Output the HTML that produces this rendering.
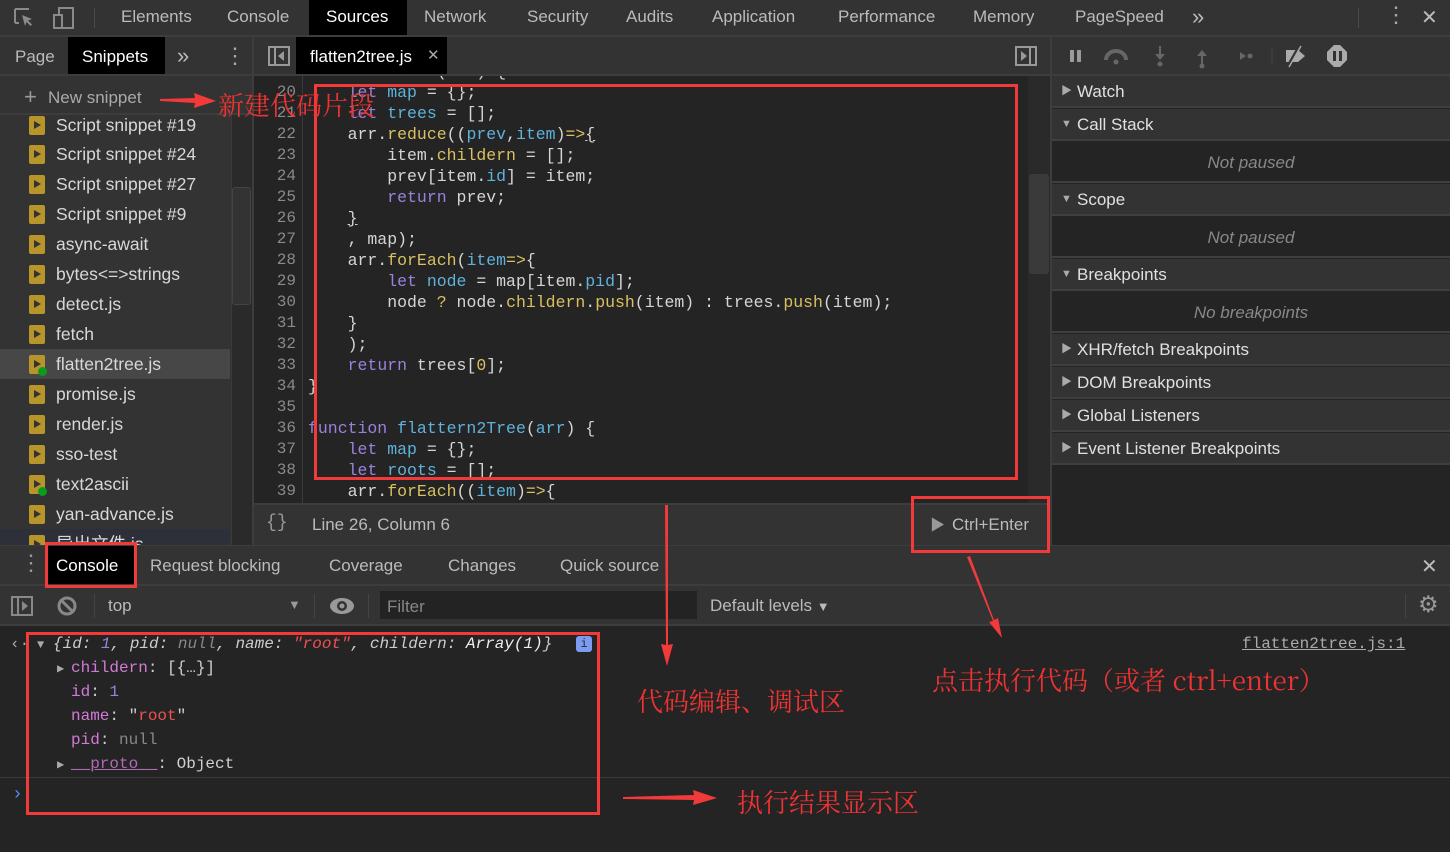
<!DOCTYPE html>
<html><head><meta charset="utf-8"><style>
*{margin:0;padding:0;box-sizing:border-box}
body{width:1450px;height:852px;background:#242424;position:relative;overflow:hidden;font-family:"Liberation Sans","Noto Sans CJK SC",sans-serif;color:#d0d0d0;font-size:17px}
.a{position:absolute;white-space:nowrap}
.bar{background:#333;border-bottom:2px solid #3d3d3d}
.mono{font-family:"Liberation Mono","DejaVu Sans Mono",monospace}
.code div{position:absolute;height:21px;line-height:21px;font-size:16.5px;white-space:pre}
.code .ln{left:256px;width:40px;text-align:right;color:#8a8a8a;font-size:16px}
.k{color:#9a82dc}.v{color:#5fb2db}.f{color:#d9c060}.s{color:#d5d5d5}
.snip{position:absolute;left:0;width:230px;height:30px;line-height:30px;padding-left:56px;color:#d8d8d8;font-size:17.5px}
.ic{position:absolute;left:29px;top:6px;width:16px;height:19px;background:#b8952a;border-radius:2px}
.ic:after{content:"";position:absolute;left:5px;top:5px;border-left:7px solid #333;border-top:4.5px solid transparent;border-bottom:4.5px solid transparent}
.sec{position:absolute;left:1052px;width:398px;height:32px;line-height:31px;background:#333;border-bottom:2px solid #3f3f3f;padding-left:25px;color:#e0e0e0;font-size:17px}
.sec i{position:absolute;left:9px;top:0;font-style:normal;font-size:11px;color:#aaa}
.np{position:absolute;left:1052px;width:398px;height:41px;line-height:41px;text-align:center;font-style:italic;color:#888;background:#242424;border-bottom:2px solid #3f3f3f}
.cl{position:absolute;height:24px;line-height:24px;font-size:16px;white-space:pre}
.red{position:absolute;border:3px solid #f23a3a}
.ann{position:absolute;color:#ee3333;font-size:26px;font-family:"Noto Serif CJK SC","Noto Sans CJK SC",serif;white-space:nowrap}
</style></head><body>
<!-- top bar -->
<div class="a bar" style="left:0;top:0;width:1450px;height:37px"></div>
<svg class="a" style="left:12px;top:6px" width="70" height="24"><path d="M3 3h14M3 3v14M3 17h4" stroke="#8a8a8a" stroke-width="2" fill="none"/><path d="M10 9l10 4-4 1.5 4 4-1.5 1.5-4-4-1.5 4z" fill="#8a8a8a"/><rect x="47" y="2" width="14" height="20" stroke="#8a8a8a" stroke-width="2" fill="none"/><rect x="42" y="9" width="8" height="13" stroke="#8a8a8a" stroke-width="2" fill="#333"/></svg>
<div class="a" style="left:94px;top:8px;width:1px;height:20px;background:#4a4a4a"></div>
<div class="a" style="left:121px;top:7px;color:#bbb">Elements</div>
<div class="a" style="left:227px;top:7px;color:#bbb">Console</div>
<div class="a" style="left:309px;top:0;width:98px;height:35px;background:#000"></div>
<div class="a" style="left:326px;top:7px;color:#fff">Sources</div>
<div class="a" style="left:424px;top:7px;color:#bbb">Network</div>
<div class="a" style="left:527px;top:7px;color:#bbb">Security</div>
<div class="a" style="left:626px;top:7px;color:#bbb">Audits</div>
<div class="a" style="left:712px;top:7px;color:#bbb">Application</div>
<div class="a" style="left:838px;top:7px;color:#bbb">Performance</div>
<div class="a" style="left:973px;top:7px;color:#bbb">Memory</div>
<div class="a" style="left:1075px;top:7px;color:#bbb">PageSpeed</div>
<div class="a" style="left:1192px;top:4px;color:#bbb;font-size:22px">»</div>
<div class="a" style="left:1358px;top:8px;width:1px;height:20px;background:#4a4a4a"></div>
<div class="a" style="left:1385px;top:2px;color:#aaa;font-size:22px">⋮</div>
<div class="a" style="left:1421px;top:5px;color:#bbb;font-size:20px">✕</div>

<!-- left sidebar -->
<div class="a bar" style="left:0;top:37px;width:252px;height:39px"></div>
<div class="a" style="left:15px;top:47px;color:#bbb">Page</div>
<div class="a" style="left:68px;top:37px;width:97px;height:37px;background:#000"></div>
<div class="a" style="left:82px;top:47px;color:#fff">Snippets</div>
<div class="a" style="left:177px;top:43px;color:#bbb;font-size:22px">»</div>
<div class="a" style="left:224px;top:43px;color:#aaa;font-size:22px">⋮</div>
<div class="a" style="left:0;top:76px;width:252px;height:39px;background:#333;border-bottom:2px solid #3d3d3d"></div>
<div class="a" style="left:24px;top:84px;color:#999;font-size:22px">+</div>
<div class="a" style="left:48px;top:88px;color:#aaa">New snippet</div>
<div class="a" style="left:0;top:115px;width:252px;height:430px;background:#333;overflow:hidden">
 <div class="snip" style="top:-5px"><b class="ic"></b>Script snippet #19</div>
 <div class="snip" style="top:24px"><b class="ic"></b>Script snippet #24</div>
 <div class="snip" style="top:54px"><b class="ic"></b>Script snippet #27</div>
 <div class="snip" style="top:84px"><b class="ic"></b>Script snippet #9</div>
 <div class="snip" style="top:114px"><b class="ic"></b>async-await</div>
 <div class="snip" style="top:144px"><b class="ic"></b>bytes&lt;=&gt;strings</div>
 <div class="snip" style="top:174px"><b class="ic"></b>detect.js</div>
 <div class="snip" style="top:204px"><b class="ic"></b>fetch</div>
 <div class="snip" style="top:234px;background:#474747"><b class="ic"></b><b class="a" style="left:38px;top:18px;width:9px;height:9px;border-radius:50%;background:#0a9c1a"></b>flatten2tree.js</div>
 <div class="snip" style="top:264px"><b class="ic"></b>promise.js</div>
 <div class="snip" style="top:294px"><b class="ic"></b>render.js</div>
 <div class="snip" style="top:324px"><b class="ic"></b>sso-test</div>
 <div class="snip" style="top:354px"><b class="ic"></b><b class="a" style="left:38px;top:18px;width:9px;height:9px;border-radius:50%;background:#0a9c1a"></b>text2ascii</div>
 <div class="snip" style="top:384px"><b class="ic"></b>yan-advance.js</div>
 <div class="snip" style="top:414px;background:#2d3038"><b class="ic"></b>导出文件.js</div>
 <div class="a" style="left:231px;top:0;width:21px;height:430px;background:#2a2a2a;border-left:1px solid #3a3a3a"></div>
 <div class="a" style="left:232px;top:72px;width:19px;height:118px;background:#333;border:1px solid #444;border-radius:3px"></div>
</div>
<div class="a" style="left:252px;top:37px;width:2px;height:508px;background:#3d3d3d"></div>

<!-- editor -->
<div class="a bar" style="left:254px;top:37px;width:796px;height:39px"></div>
<svg class="a" style="left:268px;top:46px" width="22" height="20"><rect x="1" y="1" width="20" height="18" stroke="#999" stroke-width="2" fill="none"/><line x1="7" y1="1" x2="7" y2="19" stroke="#999" stroke-width="2"/><path d="M16 5v10l-6-5z" fill="#999"/></svg>
<div class="a" style="left:296px;top:37px;width:151px;height:37px;background:#000"></div>
<div class="a" style="left:310px;top:47px;color:#fff">flatten2tree.js</div>
<div class="a" style="left:427px;top:46px;color:#aaa;font-size:15px">✕</div>
<svg class="a" style="left:1015px;top:46px" width="22" height="20"><rect x="1" y="1" width="20" height="18" stroke="#999" stroke-width="2" fill="none"/><line x1="15" y1="1" x2="15" y2="19" stroke="#999" stroke-width="2"/><path d="M6 5v10l6-5z" fill="#999"/></svg>
<div class="a" style="left:254px;top:76px;width:796px;height:429px;background:#242424;overflow:hidden">
 <div class="a" style="left:48px;top:0;width:1px;height:429px;background:#3a3a3a"></div>
 <div class="a" style="left:774px;top:0;width:22px;height:429px;background:#2a2a2a"></div>
 <div class="a" style="left:775px;top:98px;width:20px;height:100px;background:#3a3a3a;border-radius:3px"></div>
</div>
<div class="a mono code" style="left:0;top:0;width:1029px;height:505px;overflow:hidden;clip-path:inset(76px 0 0 254px)">
<div style="top:61px;left:308px" class="s">    function (arr) {</div>
<div class="ln" style="top:82px">20</div><div style="top:82px;left:308px" class="s">    <span class="k">let</span> <span class="v">map</span> = {};</div>
<div class="ln" style="top:103px">21</div><div style="top:103px;left:308px" class="s">    <span class="k">let</span> <span class="v">trees</span> = [];</div>
<div class="ln" style="top:124px">22</div><div style="top:124px;left:308px" class="s">    arr.<span class="f">reduce</span>((<span class="v">prev</span>,<span class="v">item</span>)<span class="f">=&gt;</span><u>{</u></div>
<div class="ln" style="top:145px">23</div><div style="top:145px;left:308px" class="s">        item.<span class="f">childern</span> = [];</div>
<div class="ln" style="top:166px">24</div><div style="top:166px;left:308px" class="s">        prev[item.<span class="v">id</span>] = item;</div>
<div class="ln" style="top:187px">25</div><div style="top:187px;left:308px" class="s">        <span class="k">return</span> prev;</div>
<div class="ln" style="top:208px">26</div><div style="top:208px;left:308px" class="s">    <u>}</u></div>
<div class="ln" style="top:229px">27</div><div style="top:229px;left:308px" class="s">    , map);</div>
<div class="ln" style="top:250px">28</div><div style="top:250px;left:308px" class="s">    arr.<span class="f">forEach</span>(<span class="v">item</span><span class="f">=&gt;</span>{</div>
<div class="ln" style="top:271px">29</div><div style="top:271px;left:308px" class="s">        <span class="k">let</span> <span class="v">node</span> = map[item.<span class="v">pid</span>];</div>
<div class="ln" style="top:292px">30</div><div style="top:292px;left:308px" class="s">        node <span class="f">?</span> node.<span class="f">childern</span>.<span class="f">push</span>(item) : trees.<span class="f">push</span>(item);</div>
<div class="ln" style="top:313px">31</div><div style="top:313px;left:308px" class="s">    }</div>
<div class="ln" style="top:334px">32</div><div style="top:334px;left:308px" class="s">    );</div>
<div class="ln" style="top:355px">33</div><div style="top:355px;left:308px" class="s">    <span class="k">return</span> trees[<span class="f">0</span>];</div>
<div class="ln" style="top:376px">34</div><div style="top:376px;left:308px" class="s">}</div>
<div class="ln" style="top:397px">35</div>
<div class="ln" style="top:418px">36</div><div style="top:418px;left:308px" class="s"><span class="k">function</span> <span class="v">flattern2Tree</span>(<span class="v">arr</span>) {</div>
<div class="ln" style="top:439px">37</div><div style="top:439px;left:308px" class="s">    <span class="k">let</span> <span class="v">map</span> = {};</div>
<div class="ln" style="top:460px">38</div><div style="top:460px;left:308px" class="s">    <span class="k">let</span> <span class="v">roots</span> = [];</div>
<div class="ln" style="top:481px">39</div><div style="top:481px;left:308px" class="s">    arr.<span class="f">forEach</span>((<span class="v">item</span>)<span class="f">=&gt;</span>{</div>
</div>
<div class="a" style="left:254px;top:503px;width:796px;height:42px;background:#333;border-top:2px solid #3d3d3d"></div>
<div class="a mono" style="left:266px;top:513px;color:#999;font-size:18px">{}</div>
<div class="a" style="left:312px;top:515px;color:#bbb">Line 26, Column 6</div>
<div class="a" style="left:930px;top:514px;color:#999;font-size:15px">▶</div>
<div class="a" style="left:952px;top:515px;color:#bbb">Ctrl+Enter</div>
<div class="a" style="left:1050px;top:37px;width:2px;height:508px;background:#3d3d3d"></div>

<!-- right pane -->
<div class="a bar" style="left:1052px;top:37px;width:398px;height:39px"></div>
<svg class="a" style="left:1062px;top:42px" width="300" height="28"><g fill="#9a9a9a"><rect x="8" y="8" width="4" height="12"/><rect x="15" y="8" width="4" height="12"/></g><g fill="#666"><path d="M44 18a10 9 0 0 1 20 0" stroke="#666" stroke-width="4" fill="none"/><circle cx="54" cy="20" r="2.5"/><path d="M97 4v8h-4l5 6 5-6h-4V4z"/><circle cx="98" cy="22" r="2.5"/><path d="M139 22v-8h-4l5-6 5 6h-4v8z"/><circle cx="140" cy="24" r="2.5"/><path d="M172 14h6v-4l6 4-6 4v-4z"/><circle cx="188" cy="14" r="2.5"/></g><line x1="210" y1="5" x2="210" y2="23" stroke="#444"/><path d="M224 8h12l7 6-7 6h-12z" fill="#aaa"/><line x1="226" y1="24" x2="238" y2="3" stroke="#333" stroke-width="3"/><line x1="227" y1="25" x2="239" y2="4" stroke="#aaa" stroke-width="1.5"/><path d="M272 3h6l7 7v8l-7 7h-6l-7-7v-8z" fill="#aaa"/><rect x="271" y="9" width="3" height="10" fill="#333"/><rect x="277" y="9" width="3" height="10" fill="#333"/></svg>
<div class="sec" style="top:76px"><i>▶</i>Watch</div>
<div class="sec" style="top:109px"><i>▼</i>Call Stack</div>
<div class="np" style="top:142px">Not paused</div>
<div class="sec" style="top:184px"><i>▼</i>Scope</div>
<div class="np" style="top:217px">Not paused</div>
<div class="sec" style="top:259px"><i>▼</i>Breakpoints</div>
<div class="np" style="top:292px">No breakpoints</div>
<div class="sec" style="top:334px"><i>▶</i>XHR/fetch Breakpoints</div>
<div class="sec" style="top:367px"><i>▶</i>DOM Breakpoints</div>
<div class="sec" style="top:400px"><i>▶</i>Global Listeners</div>
<div class="sec" style="top:433px"><i>▶</i>Event Listener Breakpoints</div>

<!-- drawer -->
<div class="a bar" style="left:0;top:545px;width:1450px;height:41px;border-top:1px solid #3d3d3d"></div>
<div class="a" style="left:20px;top:550px;color:#999;font-size:22px">⋮</div>
<div class="a" style="left:46px;top:546px;width:90px;height:38px;background:#000"></div>
<div class="a" style="left:56px;top:556px;color:#fff">Console</div>
<div class="a" style="left:150px;top:556px;color:#bbb">Request blocking</div>
<div class="a" style="left:329px;top:556px;color:#bbb">Coverage</div>
<div class="a" style="left:448px;top:556px;color:#bbb">Changes</div>
<div class="a" style="left:560px;top:556px;color:#bbb">Quick source</div>
<div class="a" style="left:1421px;top:554px;color:#bbb;font-size:20px">✕</div>
<div class="a bar" style="left:0;top:586px;width:1450px;height:40px"></div>
<svg class="a" style="left:10px;top:594px" width="70" height="24"><rect x="2" y="3" width="20" height="18" stroke="#888" stroke-width="2" fill="none"/><line x1="8" y1="3" x2="8" y2="21" stroke="#888" stroke-width="2"/><path d="M12 7v10l6-5z" fill="#888"/><circle cx="57" cy="12" r="8" stroke="#888" stroke-width="3" fill="none"/><line x1="51" y1="6" x2="63" y2="18" stroke="#888" stroke-width="3"/></svg>
<div class="a" style="left:94px;top:594px;width:1px;height:24px;background:#444"></div>
<div class="a" style="left:108px;top:596px;color:#bbb">top</div>
<div class="a" style="left:288px;top:597px;color:#999;font-size:13px">▼</div>
<div class="a" style="left:314px;top:594px;width:1px;height:24px;background:#444"></div>
<svg class="a" style="left:329px;top:596px" width="26" height="20"><ellipse cx="13" cy="10" rx="12" ry="8" fill="#999"/><circle cx="13" cy="10" r="5" fill="#333"/><circle cx="13" cy="10" r="2.5" fill="#999"/></svg>
<div class="a" style="left:368px;top:594px;width:1px;height:24px;background:#444"></div>
<div class="a" style="left:380px;top:591px;width:317px;height:28px;background:#232323"></div>
<div class="a" style="left:387px;top:597px;color:#888">Filter</div>
<div class="a" style="left:710px;top:596px;color:#bbb">Default levels <span style="font-size:13px">▼</span></div>
<div class="a" style="left:1405px;top:594px;width:1px;height:24px;background:#444"></div>
<div class="a" style="left:1418px;top:591px;color:#999;font-size:23px">⚙</div>

<!-- console output -->
<div class="a mono" style="left:0;top:626px;width:1450px;height:226px">
<div class="cl" style="left:10px;top:6px;color:#aaa">‹·</div>
<div class="cl" style="left:37px;top:7px;color:#aaa;font-size:12px">▼</div>
<div class="cl" style="left:53px;top:6px;font-style:italic;color:#ccc">{id: <span style="color:#9a82dc">1</span>, pid: <span style="color:#888">null</span>, name: <span style="color:#f05050">"root"</span>, childern: <span style="color:#eee">Array(1)</span>}</div>
<div class="a" style="left:576px;top:10px;width:16px;height:16px;background:#7b9cf0;border-radius:3px;color:#233;font-size:12px;text-align:center;line-height:16px">i</div>
<div class="cl" style="left:1242px;top:6px;color:#aaa;text-decoration:underline">flatten2tree.js:1</div>
<div class="cl" style="left:57px;top:31px;color:#aaa;font-size:12px">▶</div>
<div class="cl" style="left:71px;top:30px"><span style="color:#d37ad8">childern</span>: [{…}]</div>
<div class="cl" style="left:71px;top:54px"><span style="color:#d37ad8">id</span>: <span style="color:#9a82dc">1</span></div>
<div class="cl" style="left:71px;top:78px"><span style="color:#d37ad8">name</span>: "<span style="color:#f05050">root</span>"</div>
<div class="cl" style="left:71px;top:102px"><span style="color:#d37ad8">pid</span>: <span style="color:#888">null</span></div>
<div class="cl" style="left:57px;top:127px;color:#aaa;font-size:12px">▶</div>
<div class="cl" style="left:71px;top:126px"><span style="color:#b06ab6;text-decoration:underline">__proto__</span>: Object</div>
<div class="a" style="left:0;top:151px;width:1450px;height:1px;background:#3a3a3a"></div>
<div class="cl" style="left:12px;top:157px;color:#4d8df0;font-size:18px">›</div>
</div>

<!-- annotations -->
<div class="red" style="left:314px;top:84px;width:704px;height:396px"></div>
<div class="red" style="left:911px;top:496px;width:139px;height:57px"></div>
<div class="red" style="left:45px;top:542px;width:92px;height:46px"></div>
<div class="red" style="left:26px;top:632px;width:574px;height:183px"></div>
<div class="ann" style="left:218px;top:86px">新建代码片段</div>
<div class="ann" style="left:637px;top:682px">代码编辑、调试区</div>
<div class="ann" style="left:932px;top:661px">点击执行代码（或者 ctrl+enter）</div>
<div class="ann" style="left:737px;top:783px">执行结果显示区</div>
<svg class="a" style="left:0;top:0" width="1450" height="852"><g fill="#f23a3a">
<path d="M160 99L195 98L194 93L216 101L194 108L195 103L160 101z"/>
<path d="M665 505L668 505L668 645L673 644L667 666L661 644L666 645z"/>
<path d="M967 557L970 556L994 620L998 618L1002 638L989 622L993 621z"/>
<path d="M623 797L694 795L693 790L717 798L693 805L694 800L623 799z"/>
</g></svg>
</body></html>
